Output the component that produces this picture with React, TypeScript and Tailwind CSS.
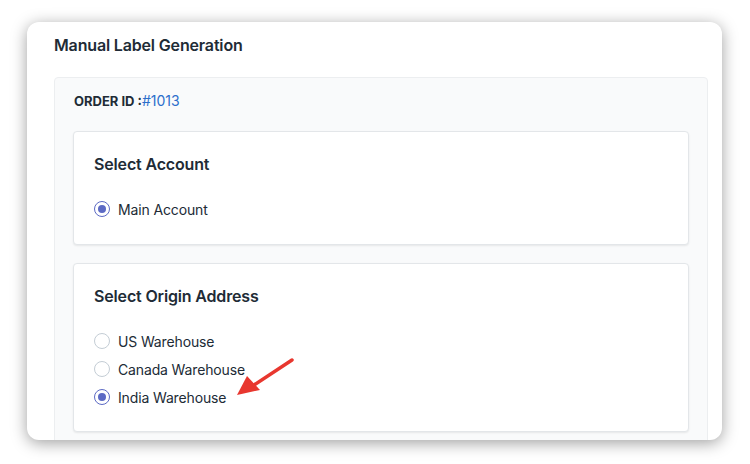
import React from 'react';

const FONT = { fontFamily: 'Inter, "Noto Sans", "Liberation Sans", sans-serif' };

const Radio = ({ checked, label }: { checked?: boolean; label: string }) => (
  <label className="flex items-center gap-2 h-7 text-[14px] text-[#212b36] tracking-[-0.01em]">
    <span
      className={
        'w-4 h-4 rounded-full border flex items-center justify-center bg-white ' +
        (checked ? 'border-[#5c6ac4]' : 'border-[#c4cdd5]')
      }
    >
      {checked && <span className="w-2 h-2 rounded-full bg-[#5c6ac4]" />}
    </span>
    {label}
  </label>
);

const Card = ({ title, children }: { title: string; children: React.ReactNode }) => (
  <div className="bg-white border border-[#e3e6e9] rounded-[4px] shadow-[0_1px_2px_rgba(0,0,0,0.08)] px-5 pt-[22px]">
    <h2 className="text-[16px] font-semibold text-[#212b36] leading-5 tracking-[-0.01em]">{title}</h2>
    {children}
  </div>
);

export default function App() {
  return (
    <div className="w-[750px] h-[464px] bg-white overflow-hidden pt-[22px] pl-[27px]" style={FONT}>
      <div className="w-[695px] h-[418px] bg-white rounded-[12px] overflow-hidden shadow-[0_3px_16px_rgba(0,0,0,0.38)] pl-[27px] pr-[14px]">
        <h1 className="pt-[13px] text-[16px] font-semibold text-[#212b36] leading-5 tracking-[-0.01em]">Manual Label Generation</h1>
        <div className="mt-[22px] bg-[#f9fafb] border border-[#eceef0] rounded-[4px] px-[18px] pt-[13px] pb-6">
          <div className="pl-px text-[13px] font-bold text-[#212b36] leading-5">
            ORDER ID :<span className="text-[14px] font-normal text-[#2c6ecb]">#1013</span>
          </div>
          <div className="mt-[20px] flex flex-col gap-[18px]">
            <Card title="Select Account">
              <div className="mt-[21px] pb-[21px]">
                <Radio checked label="Main Account" />
              </div>
            </Card>
            <div className="relative">
              <Card title="Select Origin Address">
                <div className="mt-[21px] pb-5">
                  <Radio label="US Warehouse" />
                  <Radio label="Canada Warehouse" />
                  <Radio checked label="India Warehouse" />
                </div>
              </Card>
              <svg className="absolute left-[159px] top-[90px]" width="70" height="50" viewBox="0 0 70 50">
                <line x1="60" y1="7" x2="22" y2="32" stroke="#e8372f" strokeWidth="3.5" strokeLinecap="round" />
                <polygon points="5,42 15,23 28,37" fill="#e8372f" />
              </svg>
            </div>
          </div>
        </div>
      </div>
    </div>
  );
}
